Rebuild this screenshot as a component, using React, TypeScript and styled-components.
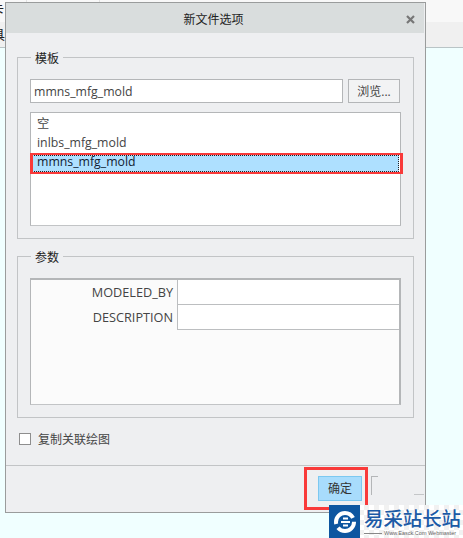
import React from 'react'
import styled, { createGlobalStyle } from 'styled-components'

const GlobalStyle = createGlobalStyle`
    html, body {
        margin: 0;
        padding: 0;
        overflow: hidden;
    }

    body {
        font-family: "Open Sans", "Noto Sans CJK SC", sans-serif;
        font-size: 12px;
        color: #333;
    }
`

const Page = styled.div`
    position: relative;
    width: 463px;
    height: 538px;
    overflow: hidden;
    background: #f0ffff;
`

const AppTabs = styled.div`
    display: flex;
    height: 22px;
    background: #f8f8f8;
`

const AppTab = styled.div<{ $w: number }>`
    width: ${p => p.$w}px;
    height: 100%;
    box-sizing: border-box;
    border-right: 1px solid #e2e2e2;
    overflow: hidden;
    font-size: 13px;
    line-height: 18px;
    text-indent: -9px;
    color: #222;
`

const AppRibbon = styled.div`
    height: 26px;
    box-sizing: border-box;
    background: #f0f0f0;
    border-bottom: 1px solid #b9c4c6;
    overflow: hidden;
    font-size: 13px;
    line-height: 24px;
    text-indent: -8px;
    color: #222;
`

const Dialog = styled.div`
    position: absolute;
    left: 5px;
    top: 2px;
    width: 421px;
    height: 511px;
    box-sizing: border-box;
    display: flex;
    flex-direction: column;
    border: 1px solid #9a9c9c;
    background: #eeeff1;
`

const TitleBar = styled.div`
    position: relative;
    flex: none;
    height: 30px;
    box-sizing: border-box;
    margin-right: 1px;
    padding: 1px 3px 0 0;
    display: flex;
    align-items: center;
    justify-content: center;
    background: #d9dddd;
    color: #222;
`

const CloseIcon = styled.svg`
    position: absolute;
    right: 9px;
    top: 12px;
    width: 9px;
    height: 9px;
`

const Content = styled.div`
    flex: 1;
    display: flex;
    flex-direction: column;
    padding: 17px 11px 0 11px;
`

const Group = styled.fieldset<{ $h: number; $top?: number }>`
    margin: ${p => p.$top ?? 0}px 0 0;
    box-sizing: border-box;
    height: ${p => p.$h}px;
    padding: 0 12px;
    border: 1px solid #c2c4c6;
    min-inline-size: 0;
`

const GroupTitle = styled.legend`
    margin-left: 1px;
    padding: 0 4px;
    height: 15px;
    line-height: 17px;
    color: #222;
`

const FileRow = styled.div`
    display: flex;
    gap: 5px;
    margin-top: 14px;
`

const FileInput = styled.div`
    width: 313px;
    height: 24px;
    box-sizing: border-box;
    padding-left: 3px;
    border: 1px solid #b4b6b8;
    background: #fff;
    font-size: 12.3px;
    line-height: 24px;
    color: #444;
`

const BrowseButton = styled.div`
    width: 52px;
    height: 24px;
    box-sizing: border-box;
    border: 1px solid #b4b6b8;
    background: #f2f3f4;
    text-align: center;
    line-height: 23px;
    color: #444;
`

const TemplateList = styled.div`
    margin-top: 9px;
    width: 371px;
    height: 114px;
    box-sizing: border-box;
    border: 1px solid #b4b6b8;
    border-bottom-color: #c2c4c6;
    padding: 1px 1px;
    background: #fff;
`

const TemplateItem = styled.div<{ $selected?: boolean }>`
    height: ${p => (p.$selected ? 17 : 19)}px;
    margin-top: ${p => (p.$selected ? 3 : 0)}px;
    padding-left: 5px;
    font-size: 12.3px;
    line-height: ${p => (p.$selected ? 14 : 19)}px;
    color: ${p => (p.$selected ? '#123' : '#444')};
    background: ${p => (p.$selected ? '#aee0ff' : 'transparent')};
    outline: ${p => (p.$selected ? '1px dotted #222' : 'none')};
    outline-offset: -1px;
`

const ParamTable = styled.div`
    margin-top: 14px;
    width: 371px;
    height: 127px;
    box-sizing: border-box;
    border: 1px solid #b4b6b8;
    border-top-width: 2px;
    border-right-width: 2px;
    border-bottom-color: #c2c4c6;
    background: #fbfbfb;
`

const ParamRow = styled.div`
    display: grid;
    grid-template-columns: 146px 1fr;
    height: 25px;
`

const ParamLabel = styled.div`
    padding-right: 4px;
    text-align: right;
    font-size: 12.7px;
    line-height: 24px;
    color: #444;
`

const ParamInput = styled.div`
    box-sizing: border-box;
    border: 1px solid #bcbec0;
    border-top: 0;
    border-right: 0;
    background: #fff;
`

const CheckRow = styled.div`
    display: flex;
    align-items: center;
    gap: 7px;
    margin: 14px 0 0 2px;
    height: 14px;
    color: #444;
`

const CheckBox = styled.span`
    width: 12px;
    height: 12px;
    box-sizing: border-box;
    border: 1px solid #8e8e8e;
    background: #fff;
`

const Footer = styled.div`
    flex: none;
    height: 47px;
    box-sizing: border-box;
    padding: 10px 1px 0 0;
    display: flex;
    justify-content: flex-end;
    gap: 9px;
    border-top: 1px solid #c2c4c6;
`

const OkButton = styled.div`
    width: 44px;
    height: 25px;
    box-sizing: border-box;
    border: 1px solid #7cc8f0;
    background: #a8dcfc;
    text-align: center;
    line-height: 23px;
    color: #333;
`

const CancelButton = styled.div`
    width: 53px;
    height: 19px;
    background:
        linear-gradient(#b4b6b8, #b4b6b8) left top / 7px 1px no-repeat,
        linear-gradient(#b4b6b8, #b4b6b8) left top / 1px 100% no-repeat,
        linear-gradient(#c4c6c8, #c4c6c8) right bottom / 10px 1px no-repeat;
`

const Marker = styled.div<{ $x: number; $y: number; $w: number; $h: number; $bv: number; $bh: number }>`
    position: absolute;
    left: ${p => p.$x}px;
    top: ${p => p.$y}px;
    width: ${p => p.$w}px;
    height: ${p => p.$h}px;
    box-sizing: border-box;
    border-style: solid;
    border-color: #f93a3a;
    border-width: ${p => p.$bv}px ${p => p.$bh}px;
`

const Watermark = styled.div`
    position: absolute;
    left: 329px;
    top: 505px;
    width: 134px;
    height: 33px;
    display: flex;
    overflow: hidden;
    background-color: #fff;
    background-image: conic-gradient(#f1f1f1 25%, #fff 0 50%, #f1f1f1 0 75%, #fff 0);
    background-size: 10px 10px;
`

const LogoMark = styled.div`
    flex: none;
    width: 31px;
    height: 33px;
    display: flex;
    align-items: center;
    justify-content: center;
    background: #0d56a0;
`

const LogoText = styled.div`
    flex: 1;
    display: flex;
    flex-direction: column;
    padding: 2px 0 0 4px;
    min-width: 0;
`

const LogoName = styled.div`
    font-family: "Noto Sans CJK SC", sans-serif;
    font-size: 19.4px;
    font-weight: 500;
    line-height: 21px;
    white-space: nowrap;
    color: #1c5aa6;
`

const LogoSub = styled.div`
    display: flex;
    align-items: center;
    gap: 2px;
    height: 7px;
    margin-top: 2px;
    font-family: "Liberation Sans", sans-serif;
    font-size: 5.5px;
    line-height: 7px;
    white-space: nowrap;
    color: #666;

    &::before {
        content: "";
        flex: none;
        width: 18px;
        height: 1px;
        background: #888;
    }
`

const App = () => {

    return (
        <Page>
            <GlobalStyle />

            <AppTabs>
                <AppTab $w={27}>卡</AppTab>
                <AppTab $w={73} />
            </AppTabs>
            <AppRibbon>具</AppRibbon>

            <Dialog>
                <TitleBar>
                    新文件选项
                    <CloseIcon viewBox="0 0 9 9">
                        <path d="M1 1 L8 8 M8 1 L1 8" stroke="#777" strokeWidth="2.2" />
                    </CloseIcon>
                </TitleBar>

                <Content>
                    <Group $h={189}>
                        <GroupTitle>模板</GroupTitle>
                        <FileRow>
                            <FileInput>mmns_mfg_mold</FileInput>
                            <BrowseButton>浏览...</BrowseButton>
                        </FileRow>
                        <TemplateList>
                            <TemplateItem>空</TemplateItem>
                            <TemplateItem>inlbs_mfg_mold</TemplateItem>
                            <TemplateItem $selected>mmns_mfg_mold</TemplateItem>
                        </TemplateList>
                    </Group>

                    <Group $h={169} $top={10}>
                        <GroupTitle>参数</GroupTitle>
                        <ParamTable>
                            <ParamRow>
                                <ParamLabel>MODELED_BY</ParamLabel>
                                <ParamInput />
                            </ParamRow>
                            <ParamRow>
                                <ParamLabel>DESCRIPTION</ParamLabel>
                                <ParamInput />
                            </ParamRow>
                        </ParamTable>
                    </Group>

                    <CheckRow>
                        <CheckBox />
                        复制关联绘图
                    </CheckRow>
                </Content>

                <Footer>
                    <OkButton>确定</OkButton>
                    <CancelButton />
                </Footer>
            </Dialog>

            <Marker $x={30} $y={153} $w={373} $h={21} $bv={2} $bh={3} />
            <Marker $x={304} $y={467} $w={64} $h={43} $bv={3} $bh={3} />

            <Watermark>
                <LogoMark>
                    <svg width="24" height="24" viewBox="0 0 24 24">
                        <circle cx="12" cy="12" r="9" fill="none" stroke="#fff" strokeWidth="4" strokeDasharray="22 4 26 4" />
                        <path d="M8 12 H17 M10 8.5 H15 M10 15.5 H15" stroke="#fff" strokeWidth="2" />
                    </svg>
                </LogoMark>
                <LogoText>
                    <LogoName>易采站长站</LogoName>
                    <LogoSub>Www.Easck.Com Webmaster</LogoSub>
                </LogoText>
            </Watermark>
        </Page>
    )

}

export default App
